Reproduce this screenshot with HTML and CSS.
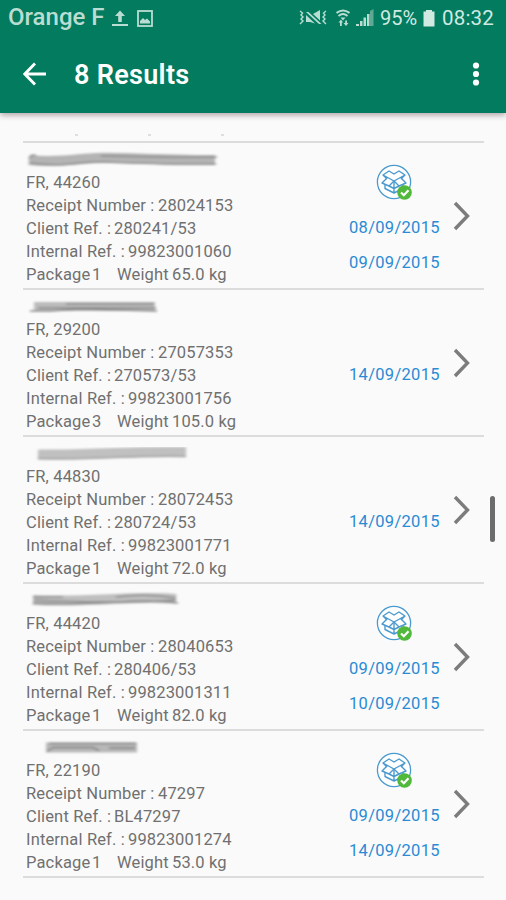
FILE: index.html
```html
<!DOCTYPE html>
<html lang="en">
<head>
    <meta charset="UTF-8">
    <meta name="viewport" content="width=device-width, initial-scale=1.0">
    <title>Results</title>
    <link rel="stylesheet" href="styles.css">
</head>
<body>
    <svg class="defs" width="0" height="0">
        <filter id="soft" x="-10%" y="-60%" width="120%" height="220%"><feGaussianBlur stdDeviation="1.8 0.9"/></filter>
        <symbol id="parcel" viewBox="0 0 38 38">
            <circle cx="18" cy="18" r="16.6" fill="#fff" stroke="#4b9acf" stroke-width="1.3"/>
            <g fill="none" stroke="#4b9acf" stroke-width="1.4" stroke-linejoin="round">
                <path d="M18 10l-5-3-6 4 11 6 11-6-6-4zM7 11l4 4M29 11l-4 4"/>
                <path d="M11 14l-5 5 7 3 5-5 5 5 7-3-5-5"/>
                <path d="M9 20v4.500l9 4.500 9-4.500V20M13 22l5 2.500 5-2.500M18 17v12"/>
            </g>
            <circle cx="28.500" cy="28.500" r="7.300" fill="#50b83a"/>
            <path d="M25 28.500l2.800 2.700 4.700-5" fill="none" stroke="#fff" stroke-width="2.200"/>
        </symbol>
        <symbol id="chevron" viewBox="0 0 18 30">
            <path d="M2 2l12.500 13L2 28" fill="none" stroke="#7c7c7c" stroke-width="3.400"/>
        </symbol>
    </svg>

    <header class="header">
        <div class="status-bar">
            <span class="carrier">Orange F</span>
            <svg class="upload" width="18" height="18" viewBox="0 0 18 18">
                <path d="M9 1.500l5 5.500h-3.200V13H7.200V7H4zM1 15h16v2H1z" fill="#b9ddd2"/>
            </svg>
            <svg class="picture" width="16" height="17" viewBox="0 0 16 17">
                <rect x="1" y="1" width="14" height="15" fill="none" stroke="#b9ddd2" stroke-width="1.800"/>
                <path d="M3 13.500V11l3-3 2 2 2-1.500 3 3v2z" fill="#b9ddd2"/>
            </svg>
            <svg class="mute" width="28" height="18" viewBox="0 0 28 18">
                <g fill="none" stroke="#b9ddd2" stroke-width="1.400">
                    <path d="M1 2l2.500 2L2 6l2 2-2 2 2 2-3 3M27 2l-2.500 2L26 6l-2 2 2 2-2 2 3 3"/>
                </g>
                <path d="M7 3h2.500l13 12H20zM14 5l7-4v10.500zM7 6l9 8.500-5-1.500H7z" fill="#b9ddd2"/>
            </svg>
            <svg class="wifi" width="14" height="18" viewBox="0 0 14 18">
                <g fill="none" stroke="#b9ddd2">
                    <path d="M0.500 4q6.500-5 13 0" stroke-width="2"/>
                    <path d="M2.500 7q4.500-4 9 0" stroke-width="1.700"/>
                </g>
                <path d="M4.500 8.500h5L7 11.500zM2.500 13.500L5 10.500l2 3H5.800V17H4v-3.500zM7.500 14h1.700v-2.500H11V14h1.500L10 17z" fill="#b9ddd2"/>
            </svg>
            <svg class="signal" width="18" height="18" viewBox="0 0 18 18">
                <path d="M0 17v-2h3v2zM4 17v-5h2.500v5zM7.500 17V8.500H10V17zM11 17V5h2.500v12z" fill="#b9ddd2"/>
                <path d="M14 17V2l3.500-2v17z" fill="#5da994"/>
            </svg>
            <span class="percent">95%</span>
            <svg class="battery" width="12" height="18" viewBox="0 0 12 18">
                <path d="M3 1h6v1.500h2.500v15H0.500v-15H3z" fill="#d0eae2"/>
            </svg>
            <span class="clock">08:32</span>
        </div>
        <div class="toolbar">
            <svg class="back" width="24" height="24" viewBox="0 0 24 24">
                <path d="M23 12H2M12 1.500L1.800 12 12 22.500" fill="none" stroke="#fff" stroke-width="2.800"/>
            </svg>
            <h1>8 Results</h1>
            <svg class="more" width="8" height="24" viewBox="0 0 8 24">
                <g fill="#fff">
                    <circle cx="4" cy="3.500" r="3.100"/>
                    <circle cx="4" cy="12" r="3.100"/>
                    <circle cx="4" cy="20.500" r="3.100"/>
                </g>
            </svg>
        </div>
    </header>

    <main class="results">
        <div class="previous"><i></i><i></i><i></i></div>

        <div class="item">
            <div class="info">
                <svg class="hidden-name" width="220" height="27" viewBox="0 -1 220 27">
                    <g filter="url(#soft)" fill="none">
                        <path d="M3 16C30 19 50 15 70 14S140 16 189 16" stroke="#b4b4b4" stroke-width="10"/>
                        <path d="M3 15q3-6 7-3M4 19C40 24 50 17 80 18s80 3 110 2M75 12c30 0 60 2 116 1" stroke="#8c8c8c" stroke-width="1.500"/>
                    </g>
                </svg>
                <p>FR, 44260</p>
                <p><span class="receipt">Receipt Number :</span>28024153</p>
                <p><span class="client">Client Ref. :</span>280241/53</p>
                <p><span class="internal">Internal Ref. :</span>99823001060</p>
                <p><span class="package">Package</span><span class="count">1</span><span class="weight">Weight</span>65.0 kg</p>
            </div>
            <div class="dates">
                <svg class="parcel"><use href="#parcel"/></svg>
                <p>08/09/2015</p>
                <p>09/09/2015</p>
            </div>
            <svg class="chevron"><use href="#chevron"/></svg>
        </div>

        <div class="item">
            <div class="info">
                <svg class="hidden-name" width="220" height="27" viewBox="0 -1 220 27">
                    <g filter="url(#soft)" fill="none">
                        <path d="M8 15.500H129" stroke="#bcbcbc" stroke-width="9"/>
                        <path d="M4 20h20l30-2 77 2M12 17h118M40 13h88" stroke="#888" stroke-width="1.500"/>
                    </g>
                </svg>
                <p>FR, 29200</p>
                <p><span class="receipt">Receipt Number :</span>27057353</p>
                <p><span class="client">Client Ref. :</span>270573/53</p>
                <p><span class="internal">Internal Ref. :</span>99823001756</p>
                <p><span class="package">Package</span><span class="count">3</span><span class="weight">Weight</span>105.0 kg</p>
            </div>
            <div class="dates">
                <p>14/09/2015</p>
            </div>
            <svg class="chevron"><use href="#chevron"/></svg>
        </div>

        <div class="item">
            <div class="info">
                <svg class="hidden-name" width="220" height="27" viewBox="0 -1 220 27">
                    <g filter="url(#soft)" fill="none">
                        <path d="M12 16.500C60 17.500 100 13 160 14" stroke="#c0c0c0" stroke-width="10"/>
                        <path d="M12 20.500C70 22.500 100 17 160 18.500" stroke="#a0a0a0" stroke-width="1.500"/>
                    </g>
                </svg>
                <p>FR, 44830</p>
                <p><span class="receipt">Receipt Number :</span>28072453</p>
                <p><span class="client">Client Ref. :</span>280724/53</p>
                <p><span class="internal">Internal Ref. :</span>99823001771</p>
                <p><span class="package">Package</span><span class="count">1</span><span class="weight">Weight</span>72.0 kg</p>
            </div>
            <div class="dates">
                <p>14/09/2015</p>
            </div>
            <svg class="chevron"><use href="#chevron"/></svg>
        </div>

        <div class="item">
            <div class="info">
                <svg class="hidden-name" width="220" height="27" viewBox="0 -1 220 27">
                    <g filter="url(#soft)" fill="none">
                        <path d="M7 15C60 18 110 10 150 14" stroke="#bfbfbf" stroke-width="10"/>
                        <path d="M7 12h30M7 18C70 22 110 12 152 18M90 12q30-4 60 1M8 15q80 4 142 0" stroke="#8c8c8c" stroke-width="1.500"/>
                    </g>
                </svg>
                <p>FR, 44420</p>
                <p><span class="receipt">Receipt Number :</span>28040653</p>
                <p><span class="client">Client Ref. :</span>280406/53</p>
                <p><span class="internal">Internal Ref. :</span>99823001311</p>
                <p><span class="package">Package</span><span class="count">1</span><span class="weight">Weight</span>82.0 kg</p>
            </div>
            <div class="dates">
                <svg class="parcel"><use href="#parcel"/></svg>
                <p>09/09/2015</p>
                <p>10/09/2015</p>
            </div>
            <svg class="chevron"><use href="#chevron"/></svg>
        </div>

        <div class="item">
            <div class="info">
                <svg class="hidden-name" width="220" height="27" viewBox="0 -1 220 27">
                    <g filter="url(#soft)" fill="none">
                        <path d="M20 15.500H111" stroke="#b8b8b8" stroke-width="10"/>
                        <path d="M23 11.500h87M21 19.500l6-4h40l6 3M83 16h26" stroke="#808080" stroke-width="1.500"/>
                    </g>
                </svg>
                <p>FR, 22190</p>
                <p><span class="receipt">Receipt Number :</span>47297</p>
                <p><span class="client">Client Ref. :</span>BL47297</p>
                <p><span class="internal">Internal Ref. :</span>99823001274</p>
                <p><span class="package">Package</span><span class="count">1</span><span class="weight">Weight</span>53.0 kg</p>
            </div>
            <div class="dates">
                <svg class="parcel"><use href="#parcel"/></svg>
                <p>09/09/2015</p>
                <p>14/09/2015</p>
            </div>
            <svg class="chevron"><use href="#chevron"/></svg>
        </div>
    </main>
    <div class="scrollbar"></div>
</body>
</html>
```
FILE: styles.css
```css
body {
    margin: 0;
    height: 900px;
    overflow: hidden;
    background-color: #fafafa;
    font-family: Roboto, sans-serif;
}
svg {
    display: block;
    flex-shrink: 0;
}
.defs {
    position: absolute;
}
.header {
    height: 113px;
    background-color: #037b5f;
    color: white;
    box-shadow: 0 2px 6px rgba(60, 20, 30, 0.4);
}
.status-bar {
    display: flex;
    align-items: center;
    height: 36px;
    padding: 0 11px 0 8px;
    color: #b9ddd2;
}
.carrier {
    width: 103px;
    font-size: 24px;
    font-weight: 500;
    line-height: 32px;
    margin-bottom: 2px;
    white-space: nowrap;
}
.picture {
    margin-left: 8px;
}
.mute {
    margin-left: auto;
}
.wifi {
    margin-left: 9px;
}
.signal {
    margin-left: 6px;
}
.percent {
    width: 43px;
    margin-left: 6px;
    font-size: 20px;
    color: #d0eae2;
}
.clock {
    width: 53px;
    margin-left: 7px;
    font-size: 20.5px;
    letter-spacing: 0.2px;
    color: #d0eae2;
}
.toolbar {
    display: flex;
    align-items: center;
    height: 76px;
    padding: 0 26px 0 23px;
}
.toolbar h1 {
    flex: 1;
    margin: 2px 0 0 27px;
    font-size: 27px;
    font-weight: 600;
    letter-spacing: 0.3px;
}
.results {
    margin: 0 22px 0 23px;
}
.previous {
    display: flex;
    gap: 70px;
    height: 7px;
    padding: 21px 0 0 52px;
    border-bottom: 2px solid #dcdcdc;
}
.previous i {
    width: 3px;
    height: 2px;
    background-color: #dedede;
}
.item {
    display: flex;
    box-sizing: border-box;
    height: 147px;
    border-bottom: 2px solid #dcdcdc;
}
.item p {
    margin: 0;
    font-size: 16.5px;
    white-space: nowrap;
}
.info {
    width: 315px;
    padding-left: 3px;
    color: #707070;
}
.hidden-name {
    height: 27px;
    margin-bottom: 2px;
}
.info p {
    display: flex;
    line-height: 22.9px;
    letter-spacing: 0.15px;
}
.receipt {
    width: 132px;
}
.client {
    width: 88px;
}
.internal {
    width: 102px;
}
.package {
    width: 66px;
}
.count {
    width: 25px;
}
.weight {
    width: 55px;
}
.dates {
    display: flex;
    flex-direction: column;
    justify-content: center;
    width: 98px;
    padding-left: 8px;
    box-sizing: border-box;
    color: #2b8ad4;
}
.dates p {
    line-height: 34.4px;
    letter-spacing: 0.3px;
}
.parcel {
    width: 38px;
    height: 38px;
    margin: 13px 0 9px 27px;
}
.dates p:only-child {
    margin-top: 26px;
}
.chevron {
    width: 18px;
    height: 30px;
    margin: 58px 0 0 14px;
}
.scrollbar {
    position: absolute;
    top: 496px;
    right: 11px;
    width: 5px;
    height: 46px;
    border-radius: 3px;
    background-color: #6c6c6c;
}
```
